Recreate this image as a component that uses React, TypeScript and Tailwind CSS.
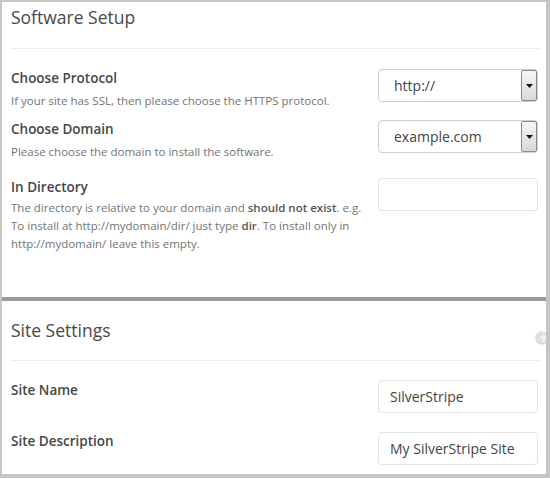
import React from "react";

const font = { fontFamily: '"Open Sans", "Noto Sans", sans-serif' };

function SelectBox({ value }: { value: string }) {
  return (
    <div className="flex h-[33px] w-[160px] items-center rounded-[4px] border border-[#cfcfcf] bg-white pl-[15px] shadow-[inset_0_1px_2px_rgba(0,0,0,0.04)]">
      <span className="flex-1 text-[14px] text-[#444]">{value}</span>
      <div className="flex h-[31px] w-[16px] items-center justify-center rounded-[2px] border border-[#8a8a8a] bg-gradient-to-b from-[#f6f6f6] to-[#d8d8d8]">
        <svg width="7" height="4" viewBox="0 0 7 4">
          <path d="M0 0h7L3.5 4z" fill="#111" />
        </svg>
      </div>
    </div>
  );
}

function TextBox({ value }: { value?: string }) {
  return (
    <div className="flex h-[33px] w-[160px] items-center rounded-[4px] border border-[#e3e3e3] bg-white pl-[11px] text-[14px] text-[#444]">
      {value}
    </div>
  );
}

export default function App() {
  return (
    <div
      style={font}
      className="h-[478px] w-[550px] overflow-hidden border-t-2 border-l-2 border-r-4 border-b-4 border-[#c6c6c6] bg-white"
    >
      {/* software setup */}
      <div className="h-[295px] pl-[9px] pr-[6px] pt-[3px]">
        <h2 className="text-[17.5px] leading-[24px] text-[#484848]">Software Setup</h2>
        <div className="mt-[19px] border-t border-[#ececec]" />

        <div className="mt-[20px] flex items-start justify-between pr-[2px]">
          <div>
            <div className="text-[13.5px] font-semibold leading-[18px] text-[#474747]">Choose Protocol</div>
            <div className="mt-[5px] text-[11.5px] leading-[18px] text-[#737373]">
              If your site has SSL, then please choose the HTTPS protocol.
            </div>
          </div>
          <SelectBox value="http://" />
        </div>

        <div className="mt-[10px] flex items-start justify-between pr-[2px]">
          <div>
            <div className="text-[13.5px] font-semibold leading-[18px] text-[#474747]">Choose Domain</div>
            <div className="mt-[5px] text-[11.5px] leading-[18px] text-[#737373]">
              Please choose the domain to install the software.
            </div>
          </div>
          <SelectBox value="example.com" />
        </div>

        <div className="mt-[17px] flex items-start justify-between pr-[2px]">
          <div>
            <div className="text-[13.5px] font-semibold leading-[18px] text-[#474747]">In Directory</div>
            <div className="mt-[3px] whitespace-nowrap text-[11.5px] leading-[18px] text-[#737373]">
              <div>
                The directory is relative to your domain and{" "}
                <b className="font-semibold text-[#555]">should not exist</b>. e.g.
              </div>
              <div>
                To install at http://mydomain/dir/ just type{" "}
                <b className="font-semibold text-[#555]">dir</b>. To install only in
              </div>
              <div>http://mydomain/ leave this empty.</div>
            </div>
          </div>
          <TextBox />
        </div>
      </div>

      <div className="h-[4px] bg-[#9b9b9b]" />

      {/* site settings */}
      <div className="relative pl-[9px] pr-[6px] pt-[17px]">
        <h2 className="text-[17.5px] leading-[24px] text-[#484848]">Site Settings</h2>
        <div className="mt-[18px] border-t border-[#ececec]" />

        <div className="mt-[19px] flex items-start justify-between pr-[2px]">
          <div className="pt-[1px] text-[13.5px] font-semibold leading-[18px] text-[#474747]">Site Name</div>
          <TextBox value="SilverStripe" />
        </div>

        <div className="mt-[19px] flex items-start justify-between pr-[2px]">
          <div className="text-[13.5px] font-semibold leading-[18px] text-[#474747]">Site Description</div>
          <TextBox value="My SilverStripe Site" />
        </div>

        <svg
          className="absolute right-[-4px] top-[29px]"
          width="16"
          height="16"
          viewBox="0 0 16 16"
        >
          <circle cx="8" cy="8" r="7.5" fill="#f0f0f0" />
          <path d="M8 2.5a5.5 5.5 0 1 0 5.5 5.5A3.5 3.5 0 0 0 8 4.5a3 3 0 0 0 0 6" fill="none" stroke="#d6d6d6" strokeWidth="1.5" />
        </svg>
      </div>
    </div>
  );
}
